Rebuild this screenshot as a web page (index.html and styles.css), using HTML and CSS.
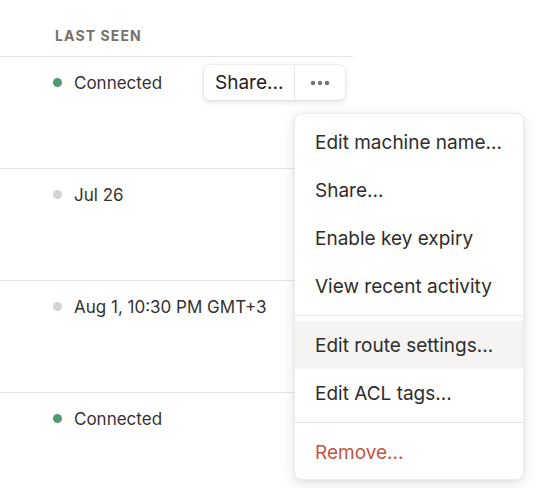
FILE: index.html
```html
<!DOCTYPE html>
<html lang="en">
<head>
<meta charset="utf-8">
<title>Machines</title>
<link rel="stylesheet" href="styles.css">
</head>
<body>
<div class="page">
  <div class="table">
    <div class="thead">Last seen</div>
    <div class="row">
      <div class="status"><span class="dot dot-on"></span>Connected</div>
      <div class="actions">
        <button class="btn btn-share">Share...</button>
        <button class="btn btn-more" aria-label="More">
          <svg width="20" height="6" viewBox="0 0 20 6"><circle cx="3" cy="3" r="2.2"/><circle cx="10" cy="3" r="2.2"/><circle cx="17" cy="3" r="2.2"/></svg>
        </button>
      </div>
    </div>
    <div class="row">
      <div class="status"><span class="dot dot-off"></span>Jul 26</div>
    </div>
    <div class="row">
      <div class="status"><span class="dot dot-off"></span>Aug 1, 10:30 PM GMT+3</div>
    </div>
    <div class="row">
      <div class="status"><span class="dot dot-on"></span>Connected</div>
    </div>
  </div>

  <div class="menu" role="menu">
    <div class="group">
      <div class="item">Edit machine name...</div>
      <div class="item">Share...</div>
      <div class="item">Enable key expiry</div>
      <div class="item">View recent activity</div>
    </div>
    <div class="group">
      <div class="item item-active">Edit route settings...</div>
      <div class="item">Edit ACL tags...</div>
    </div>
    <div class="group">
      <div class="item item-danger">Remove...</div>
    </div>
  </div>
</div>
</body>
</html>
```

FILE: styles.css
```css
* { box-sizing: border-box; }

html, body {
  margin: 0;
  padding: 0;
  background: #fff;
}

body {
  font-family: Inter, "Noto Sans", sans-serif;
  color: #2f2d2b;
  overflow: hidden;
}

.page {
  position: relative;
  width: 536px;
  height: 488px;
}

.table {
  width: 353px;
}

.thead {
  height: 57px;
  padding: 28px 0 0 55px;
  font-size: 14px;
  font-weight: 700;
  letter-spacing: 0.08em;
  text-transform: uppercase;
  color: #76716c;
  line-height: 16px;
  border-bottom: 1px solid #e7e5e4;
}

.row {
  height: 112px;
  display: flex;
  align-items: flex-start;
  justify-content: space-between;
  padding: 8px 8px 0 53px;
  border-bottom: 1px solid #e7e5e4;
}

.status {
  display: flex;
  align-items: center;
  height: 35px;
  font-size: 17px;
  color: #35322f;
}

.dot {
  width: 9px;
  height: 9px;
  border-radius: 50%;
  margin-right: 12px;
  flex: none;
}

.dot-on { background: #4e9a6b; }
.dot-off { background: #d6d3d1; }

.actions {
  display: flex;
  height: 35px;
  border-radius: 6px;
  background: #fff;
  box-shadow: 0 0 0 1px rgba(0, 0, 0, 0.04), 0 2px 6px rgba(0, 0, 0, 0.12);
}

.btn {
  border: 0;
  background: transparent;
  font: inherit;
  color: #1f1d1b;
  cursor: pointer;
  padding: 0;
  display: flex;
  align-items: center;
}

.btn-share {
  font-size: 19px;
  width: 91px;
  padding-left: 11px;
  border-right: 1px solid #e7e5e4;
}

.btn-more {
  width: 50px;
  justify-content: center;
  fill: #77726d;
}

.menu {
  position: absolute;
  left: 294px;
  top: 113px;
  width: 230px;
  padding: 4px 0 3px;
  background: #fff;
  border-radius: 8px;
  border: 1px solid #eeedec;
  box-shadow: 0 4px 16px rgba(0, 0, 0, 0.10), 0 1px 4px rgba(0, 0, 0, 0.06);
}

.group + .group {
  border-top: 1px solid #e7e5e4;
  margin-top: 5px;
  padding-top: 5px;
}

.item {
  height: 48px;
  display: flex;
  align-items: center;
  padding-left: 20px;
  font-size: 19px;
  color: #2f2d2b;
  white-space: nowrap;
}

.item-active { background: #f5f4f3; }
.item-danger { color: #c5533f; }
```
